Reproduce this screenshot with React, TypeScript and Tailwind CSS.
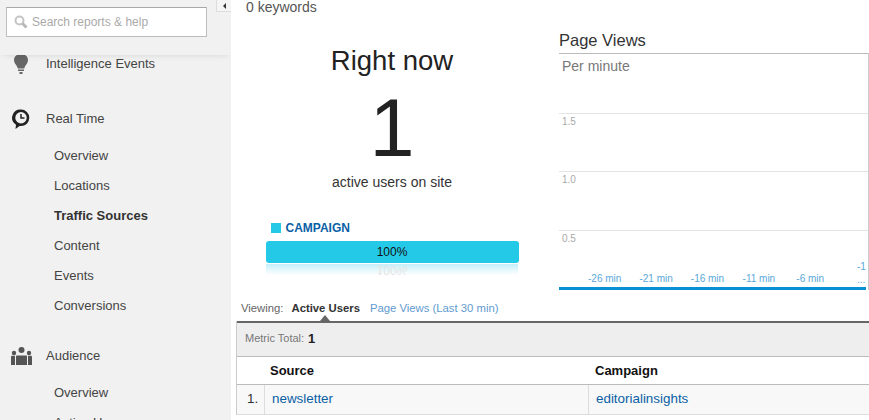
const subItems = ["Overview", "Locations", "Traffic Sources", "Content", "Events", "Conversions"];
const ticks = ["-26 min", "-21 min", "-16 min", "-11 min", "-6 min"];

const SearchIcon = () => (
  <svg width="14" height="14" viewBox="0 0 14 14" fill="none" className="mr-[4px]">
    <circle cx="5.500" cy="5.500" r="4" stroke="#c4c4c4" strokeWidth="2" />
    <path d="M8.500 8.500l4 4" stroke="#b8b8b8" strokeWidth="3" />
  </svg>
);

const BulbIcon = () => (
  <svg width="16" height="20" viewBox="0 0 16 20" fill="#666">
    <path d="M8 0C3.800 0 1 2.600 1 6c0 3 2 4.600 3 6.500.4.800.6 1.500.7 2h6.600c.1-.5.3-1.200.7-2 1-1.900 3-3.500 3-6.500 0-3.400-2.800-6-7-6z" />
    <rect x="5" y="15.500" width="6" height="1.500" />
    <rect x="6.500" y="18" width="3" height="2" />
  </svg>
);

const ClockIcon = () => (
  <svg width="18" height="20" viewBox="0 0 18 20">
    <path fill="#222" d="M9 .5a8.300 8.300 0 0 1 0 16.600H7.500L3.500 20l.5-4.200A8.300 8.300 0 0 1 9 .5z" />
    <circle cx="9" cy="8.800" r="5.700" fill="#f1f1f1" />
    <path d="M9 5v4h3.500" fill="none" stroke="#222" strokeWidth="1.500" />
  </svg>
);

const AudienceIcon = () => (
  <svg width="21" height="18" viewBox="0 0 21 18" fill="#555">
    <circle cx="10.500" cy="3" r="3" />
    <circle cx="3" cy="6" r="2.200" />
    <circle cx="18" cy="6" r="2.200" />
    <path d="M6 8.500h9c.7 0 1 .4 1 1V18H5V9.500c0-.6.3-1 1-1z" />
    <path d="M0 10c0-.8.500-1.300 1.200-1.300H4V18H0zM21 10c0-.8-.5-1.300-1.200-1.300H17V18h4z" />
  </svg>
);

const NavHead = ({ icon, label }: { icon: React.ReactNode; label: string }) => (
  <div className="flex h-[30px] items-center text-[13px] text-[#444]">
    <span className="flex w-[46px] justify-center pl-[2px] pr-[6px]">{icon}</span>
    {label}
  </div>
);

const SubItem = ({ label }: { label: string }) => (
  <div className={`flex h-[30px] items-center pl-[54px] text-[13px] ${label === "Traffic Sources" ? "font-bold text-[#333]" : "text-[#444]"}`}>
    {label}
  </div>
);

const Sidebar = () => (
  <div className="relative h-[420px] w-[231px] shrink-0 overflow-hidden bg-[#f1f1f1]">
    <div className="relative z-10 h-[55px] bg-[#f1f1f1] pl-[6px] pt-[7px] shadow-[0_3px_6px_-3px_rgba(0,0,0,0.12)]">
      <div className="flex h-[30px] w-[201px] items-center border border-[#bdbdbd] border-t-[#a8a8a8] bg-white pl-[7px] text-[12px] text-[#aaa]">
        <SearchIcon />
        Search reports &amp; help
      </div>
    </div>
    <div className="-mt-[6px]">
      <NavHead icon={<BulbIcon />} label="Intelligence Events" />
    </div>
    <div className="mt-[25px]">
      <NavHead icon={<ClockIcon />} label="Real Time" />
    </div>
    <div className="mt-[7px]">
      {subItems.map((s) => (
        <SubItem key={s} label={s} />
      ))}
    </div>
    <div className="mt-[20px]">
      <NavHead icon={<AudienceIcon />} label="Audience" />
    </div>
    <div className="mt-[7px]">
      <SubItem label="Overview" />
      <SubItem label="Active Users" />
    </div>
    <div className="absolute right-0 top-0 z-20 flex h-[12px] w-[15px] items-center justify-center border-b border-l border-[#ddd] bg-[#f5f5f5]">
      <span className="h-0 w-0 border-y-[3px] border-r-[3px] border-y-transparent border-r-[#333]" />
    </div>
  </div>
);

const GridRow = ({ label, height }: { label: string; height: string }) => (
  <div className={`border-t border-[#e4e4e4] pl-[3px] pt-[2px] text-[10px] leading-[12px] text-[#aaa] ${height}`}>{label}</div>
);

const Chart = () => (
  <div className="ml-[10px] mt-[2px] w-[310px] shrink-0">
    <div className="h-[23px] text-[16.500px] leading-[20px] text-[#333]">Page Views</div>
    <div className="h-[237px] border-r border-t border-[#bbb] border-r-[#ccc]">
      <div className="h-[59px] pl-[3px] pt-[4px] text-[14px] leading-[16px] text-[#777]">Per minute</div>
      <GridRow label="1.5" height="h-[58px]" />
      <GridRow label="1.0" height="h-[59px]" />
      <GridRow label="0.5" height="h-[34px]" />
      <div className="relative flex h-[23px] items-end pb-[2px] pl-[20px] text-[10px] leading-[12px] text-[#5aa8d8]">
        {ticks.map((t) => (
          <span key={t} className="w-[51.400px] shrink-0 text-center">
            {t}
          </span>
        ))}
        <span className="absolute bottom-[1px] right-[1px] w-[10px] text-[10px] leading-[13px]">
          -1
          <br />
          ...
        </span>
      </div>
      <div className="h-[3px] w-[307px] bg-[#0a8fd2]" />
    </div>
  </div>
);

const RightNow = () => (
  <div className="flex w-[314px] shrink-0 flex-col items-center">
    <div className="mt-[17px] text-[27.500px] leading-[32px] text-[#222]">Right now</div>
    <div className="mt-[13px] h-[76px] text-[81px] leading-[76px] text-[#222]">1</div>
    <div className="mt-[8px] text-[14px] leading-[16px] text-[#333]">active users on site</div>
    <div className="mt-[31px] flex w-[253px] items-center pl-[5px] text-[12px] font-bold leading-[14px] text-[#0b5fa5]">
      <span className="mr-[5px] h-[10px] w-[10px] bg-[#25c9e8]" />
      CAMPAIGN
    </div>
    <div className="mt-[6px] flex h-[22px] w-[253px] items-center justify-center rounded-[3px] bg-[#25c9e8] text-[12px] text-[#111]">
      100%
    </div>
    <div className="mt-[1px] flex h-[11px] w-[252px] items-end justify-center overflow-hidden bg-gradient-to-b from-[#c3eff9] to-white text-[12px] leading-[10px] text-[#e4e4e4]">
      <span className="-scale-y-100">100%</span>
    </div>
  </div>
);

const Table = () => (
  <div className="ml-[5px] border-l border-[#ccc]">
    <div className="relative flex h-[35px] items-center border-t-[2px] border-[#666] bg-[#eee] pb-[2px] pl-[8px] text-[11px] text-[#777]">
      Metric Total:
      <span className="ml-[4px] text-[13px] font-bold text-[#222]">1</span>
      <span className="absolute -top-[8px] left-[83px] h-0 w-0 border-x-[5px] border-b-[6px] border-x-transparent border-b-[#666]" />
    </div>
    <div className="flex h-[29px] items-center border-y border-[#bbb] bg-white text-[13px] font-bold text-[#111]">
      <span className="w-[33px]" />
      <span className="w-[325px]">Source</span>
      <span>Campaign</span>
    </div>
    <div className="flex h-[30px] border-b border-[#ddd] bg-[#f8f8f8] text-[13.400px] text-[#0b5fa5]">
      <span className="flex w-[28px] items-center border-r border-[#ddd] pl-[10px] text-[#333]">1.</span>
      <span className="flex w-[324px] items-center border-r border-[#ddd] pl-[7px]">newsletter</span>
      <span className="flex items-center pl-[7px]">editorialinsights</span>
    </div>
  </div>
);

export default function App() {
  return (
    <div className="flex h-[420px] w-[869px] overflow-hidden bg-white font-['Liberation_Sans',Arial,sans-serif]">
      <Sidebar />
      <div className="min-w-0 flex-1">
        <div className="h-[14px] pl-[15px] text-[14px] leading-[14px] text-[#555]">0 keywords</div>
        <div className="flex pl-[4px] pt-[14px]">
          <RightNow />
          <Chart />
        </div>
        <div className="ml-[10px] mt-[10px] flex h-[17px] items-center text-[11.300px]">
          <span className="text-[#666]">Viewing:</span>
          <span className="ml-[8px] font-bold text-[#333]">Active Users</span>
          <span className="ml-[10px] text-[#5f9bd0]">Page Views (Last 30 min)</span>
        </div>
        <div className="mt-[4px]">
          <Table />
        </div>
      </div>
    </div>
  );
}
